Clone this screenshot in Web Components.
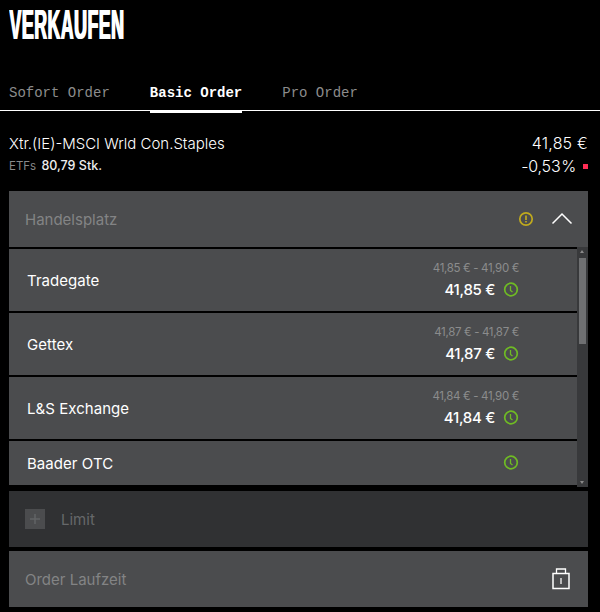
<!DOCTYPE html>
<html lang="de">
<head>
<meta charset="utf-8">
<title>Verkaufen</title>
<style>
html,body{margin:0;height:100%;background:#000;overflow:hidden;}
body{font-family:Inter,"Liberation Sans",sans-serif;color:#fff;}
</style>
</head>
<body>
<order-page></order-page>
<script>
const icons = {
	warn: `<svg width="16" height="16" viewBox="0 0 16 16" fill="none"><circle cx="8" cy="8" r="6.2" stroke="#c0aa1e" stroke-width="1.7"/><path d="M8 4.500v4.500" stroke="#c0aa1e" stroke-width="1.7"/><path d="M8 10v1.500" stroke="#c0aa1e" stroke-width="1.7"/></svg>`,
	chevron: `<svg width="22" height="14" viewBox="0 0 22 14" fill="none"><path d="M1.500 11.500 11 2l9.500 9.500" stroke="#fff" stroke-width="1.500"/></svg>`,
	clock: `<svg width="16" height="16" viewBox="0 0 16 16" fill="none"><circle cx="8" cy="7.500" r="6.300" stroke="#6fbb24" stroke-width="1.700"/><path d="M7.500 4V8.500l2 1.600" stroke="#6fbb24" stroke-width="1.300"/></svg>`,
	lock: `<svg width="18" height="22" viewBox="0 0 18 22" fill="none"><path d="M1 5.500h16v15H1z" stroke="#fff" stroke-width="1.500"/><path d="M4.500 5V1h9v4" stroke="#fff" stroke-width="1.300"/><path d="M9 10v6" stroke="#bbb" stroke-width="2"/></svg>`
};

class TabBar extends HTMLElement{
	constructor(){
		super();
		this.attachShadow({mode: 'open'}).innerHTML = `
<style>
:host{display:flex;gap:40px;padding:0 9px;height:34px;border-bottom:1px solid #fff;position:relative;}
</style>
<slot></slot>`;
	}
}

class TabItem extends HTMLElement{
	constructor(){
		super();
		this.attachShadow({mode: 'open'}).innerHTML = `
<style>
:host{display:block;height:34px;box-sizing:border-box;padding-top:9px;font:14px/16px "Liberation Mono",monospace;color:#8c8c8c;position:relative;}
:host([active]){color:#fff;font-weight:700;}
:host([active])::after{content:"";position:absolute;left:0;right:0;top:34px;height:3px;background:#fff;}
</style>
<slot></slot>`;
	}
}

class InstrumentInfo extends HTMLElement{
	constructor(){
		super();
		this.attachShadow({mode: 'open'}).innerHTML = `
<style>
:host{display:flex;justify-content:space-between;padding:23px 12px 0 9px;height:80px;box-sizing:border-box;}
.name{font-size:15px;font-weight:300;line-height:20px;}
.sub{font-size:11.500px;line-height:16px;margin-top:4px;color:#8a8a8a;}
.sub b{font-weight:500;font-size:12.500px;margin-left:2px;color:#eee;}
.right{text-align:right;font-size:16px;font-weight:300;line-height:20px;margin-top:-1px;letter-spacing:.2px;}
.chg{margin-top:3px;display:flex;align-items:center;justify-content:flex-end;gap:7px;letter-spacing:-.2px;word-spacing:-3.500px;}
.chg i{width:5px;height:5px;background:#ff2d55;display:block;}
</style>
<div>
	<div class="name"><slot name="name"></slot></div>
	<div class="sub"><slot name="type"></slot> <b><slot name="qty"></slot></b></div>
</div>
<div class="right">
	<div><slot name="price"></slot></div>
	<div class="chg"><span><slot name="change"></slot></span><i></i></div>
</div>`;
	}
}

class FormPanel extends HTMLElement{
	constructor(){
		super();
		this.attachShadow({mode: 'open'}).innerHTML = `
<style>
:host{display:flex;align-items:center;height:56px;background:#4b4c4e;padding:0 16px;color:#838485;font-size:15px;}
:host([disabled]){background:#303133;color:#66686a;}
.label{flex:1;}
.end{display:flex;align-items:center;}
</style>
<slot name="start"></slot>
<div class="label"><slot></slot></div>
<div class="end"><slot name="end"></slot></div>`;
	}
}

class VenueRow extends HTMLElement{
	static get observedAttributes(){
		return ['name', 'range', 'price'];
	}
	constructor(){
		super();
		this.attachShadow({mode: 'open'}).innerHTML = `
<style>
:host{display:flex;align-items:center;justify-content:space-between;flex:none;height:62px;background:#4b4c4e;padding:0 58px 0 18px;box-sizing:border-box;}
:host([compact]){height:44px;}
:host([compact]) .range{display:none;}
.name{font-size:15px;font-weight:400;letter-spacing:.05px;color:#fff;}
.right{text-align:right;}
.range{font-size:11.500px;line-height:16px;color:#8b8c8d;letter-spacing:-.35px;margin:-1px 0 4px;}
.now{display:flex;align-items:center;justify-content:flex-end;gap:8px;font-size:15px;line-height:20px;font-weight:500;letter-spacing:-.3px;color:#fff;}
svg{display:block;}
</style>
<div class="name"></div>
<div class="right">
	<div class="range"></div>
	<div class="now"><span class="price"></span>${icons.clock}</div>
</div>`;
	}
	attributeChangedCallback(attribute, oldValue, newValue){
		this.shadowRoot.querySelector('.' + attribute).textContent = newValue;
	}
}

class VenueList extends HTMLElement{
	constructor(){
		super();
		this.attachShadow({mode: 'open'}).innerHTML = `
<style>
:host{display:flex;height:240px;background:#000;}
.rows{flex:1;min-width:0;display:flex;flex-direction:column;gap:2px;padding-top:2px;overflow:hidden;height:238px;}
.bar{flex:none;width:11px;background:#38393b;position:relative;}
.bar::before,.bar::after{content:"";position:absolute;left:3px;border:2.500px solid transparent;}
.bar::before{top:3px;border-bottom:3px solid #8a8a8a;border-top:0;}
.bar::after{bottom:3px;border-top:3px solid #8a8a8a;border-bottom:0;}
.thumb{position:absolute;left:2px;right:2px;top:11px;height:86px;background:#6f7072;}
</style>
<div class="rows"><slot></slot></div>
<div class="bar"><div class="thumb"></div></div>`;
	}
}

class OrderPage extends HTMLElement{
	constructor(){
		super();
		this.attachShadow({mode: 'open'}).innerHTML = `
<style>
:host{display:block;width:600px;height:612px;color:#fff;}
h1{margin:0;height:76px;padding:0 0 0 9px;box-sizing:border-box;font:700 42px/50px "Liberation Sans",sans-serif;}
h1 span{display:inline-block;transform-origin:0 0;transform:scaleX(.425);letter-spacing:1px;text-shadow:2.500px 0 0 #fff;}
.form{display:flex;flex-direction:column;padding:0 12px 0 9px;}
.gap-s{height:4px;}
svg{display:block;}
.plus{width:20px;height:20px;background:#4b4c4e;margin-right:16px;display:flex;}
.warn{margin-right:17px;}
.chev{margin-right:-1px;}
.lock{margin-right:2px;}
</style>
<h1><span>VERKAUFEN</span></h1>
<tab-bar>
	<tab-item>Sofort Order</tab-item>
	<tab-item active>Basic Order</tab-item>
	<tab-item>Pro Order</tab-item>
</tab-bar>
<instrument-info>
	<span slot="name">Xtr.(IE)-MSCI Wrld Con.Staples</span>
	<span slot="type">ETFs</span>
	<span slot="qty">80,79 Stk.</span>
	<span slot="price">41,85 €</span>
	<span slot="change">-0,53 %</span>
</instrument-info>
<div class="form">
	<form-panel>Handelsplatz
		<span slot="end" class="warn">${icons.warn}</span>
		<span slot="end" class="chev">${icons.chevron}</span>
	</form-panel>
	<venue-list>
		<venue-row name="Tradegate" range="41,85 € - 41,90 €" price="41,85 €"></venue-row>
		<venue-row name="Gettex" range="41,87 € - 41,87 €" price="41,87 €"></venue-row>
		<venue-row name="L&amp;S Exchange" range="41,84 € - 41,90 €" price="41,84 €"></venue-row>
		<venue-row compact name="Baader OTC" range="" price=""></venue-row>
	</venue-list>
	<div class="gap-s"></div>
	<form-panel disabled>
		<span slot="start" class="plus"><svg width="20" height="20" viewBox="0 0 20 20"><path d="M5 10h10M10 5v10" stroke="#626365" stroke-width="1.500"/></svg></span>
		Limit
	</form-panel>
	<div class="gap-s"></div>
	<form-panel>Order Laufzeit
		<span slot="end" class="lock">${icons.lock}</span>
	</form-panel>
</div>`;
	}
}

customElements.define('tab-bar', TabBar);
customElements.define('tab-item', TabItem);
customElements.define('instrument-info', InstrumentInfo);
customElements.define('form-panel', FormPanel);
customElements.define('venue-row', VenueRow);
customElements.define('venue-list', VenueList);
customElements.define('order-page', OrderPage);
</script>
</body>
</html>
